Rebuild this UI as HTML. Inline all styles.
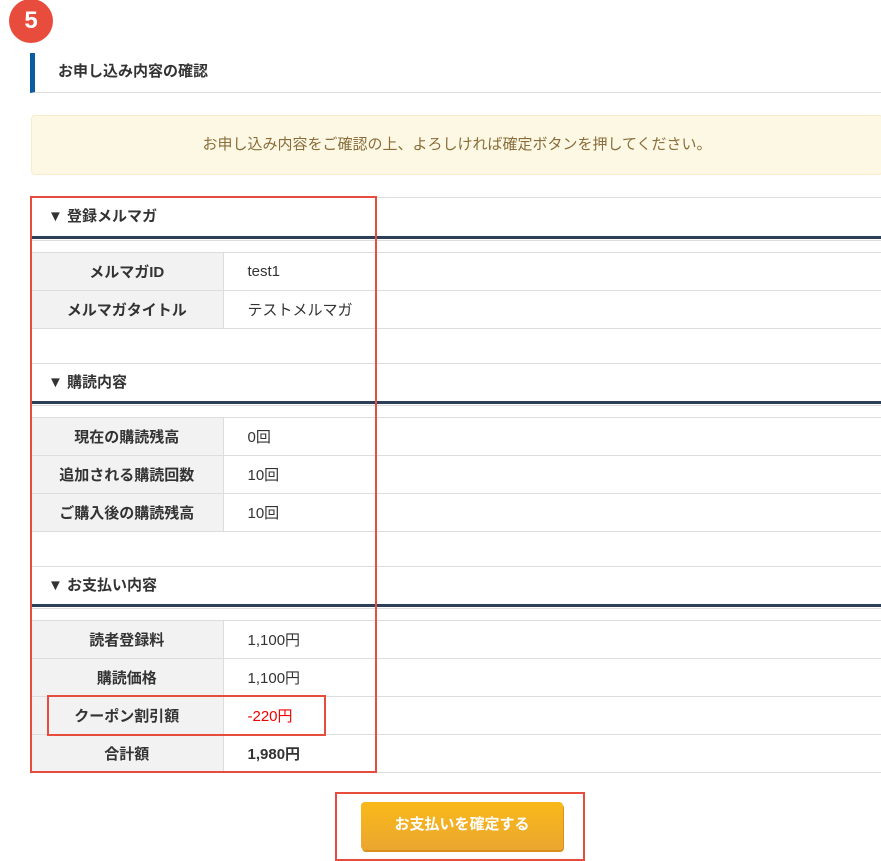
<!DOCTYPE html>
<html><head><meta charset="utf-8"><style>
*{margin:0;padding:0;box-sizing:border-box}
body{width:881px;height:861px;background:#fff;position:relative;overflow:hidden;font-family:"Liberation Sans","Noto Sans CJK JP",sans-serif;color:#333;font-size:15px}
.a{position:absolute}
.badge{left:9px;top:-1px;width:44px;height:44px;border-radius:50%;background:#e74c3c;color:#fff;font-weight:bold;font-size:24px;text-align:center;line-height:44px}
.h2{left:30px;top:53px;width:851px;height:40px;border-left:5px solid #0a5da0;border-bottom:1px solid #ddd;font-weight:bold;font-size:15px;line-height:38px;padding-left:23px}
.note{left:31px;top:115px;width:852px;height:60px;background:#fcf8e3;border:1px solid #faebcc;border-radius:4px;color:#8a6d3b;text-align:center;line-height:57px;font-size:15px}
.sh{left:31px;width:850px;border-top:1px solid #ddd;font-weight:bold;font-size:15px;padding-left:17px}
.navy{left:31px;width:850px;height:3px;background:#2c3e5a}
.thin{left:31px;width:850px;height:1px;background:#ddd}
table{position:absolute;left:31px;width:850px;border-collapse:collapse}
td{height:38px;border-top:1px solid #ddd;border-bottom:1px solid #ddd;font-size:15px}
td.l{width:192px;background:#f2f2f2;font-weight:bold;text-align:center;border-right:1px solid #ddd}
td.v{padding-left:24px}
.red{border:2px solid #e74c3c}
.btn{left:361px;top:802px;width:202px;height:48px;border-radius:4px;background:linear-gradient(#f9b918,#eba630);box-shadow:1px 2px 0 #d98f1a;color:#fff;font-weight:bold;font-size:15px;text-align:center;line-height:46px}
</style></head><body>
<div class="a badge">5</div>
<div class="a h2">お申し込み内容の確認</div>
<div class="a note">お申し込み内容をご確認の上、よろしければ確定ボタンを押してください。</div>

<div class="a sh" style="top:197px;line-height:38px;height:39px">▼ 登録メルマガ</div>
<div class="a navy" style="top:236px"></div>
<div class="a thin" style="top:240px"></div>
<table style="top:252px">
<tr><td class="l">メルマガID</td><td class="v">test1</td></tr>
<tr><td class="l">メルマガタイトル</td><td class="v">テストメルマガ</td></tr>
</table>

<div class="a sh" style="top:363px;line-height:37px;height:38px">▼ 購読内容</div>
<div class="a navy" style="top:401px"></div>
<div class="a thin" style="top:405px"></div>
<table style="top:417px">
<tr><td class="l">現在の購読残高</td><td class="v">0回</td></tr>
<tr><td class="l">追加される購読回数</td><td class="v">10回</td></tr>
<tr><td class="l">ご購入後の購読残高</td><td class="v">10回</td></tr>
</table>

<div class="a sh" style="top:566px;line-height:37px;height:38px">▼ お支払い内容</div>
<div class="a navy" style="top:604px"></div>
<div class="a thin" style="top:608px"></div>
<table style="top:620px">
<tr><td class="l">読者登録料</td><td class="v">1,100円</td></tr>
<tr><td class="l">購読価格</td><td class="v">1,100円</td></tr>
<tr><td class="l">クーポン割引額</td><td class="v" style="color:#e00">-220円</td></tr>
<tr><td class="l">合計額</td><td class="v" style="font-weight:bold">1,980円</td></tr>
</table>

<div class="a red" style="left:30px;top:196px;width:347px;height:577px"></div>
<div class="a red" style="left:47px;top:695px;width:279px;height:41px"></div>
<div class="a red" style="left:335px;top:792px;width:250px;height:69px"></div>
<div class="a btn">お支払いを確定する</div>
</body></html>
